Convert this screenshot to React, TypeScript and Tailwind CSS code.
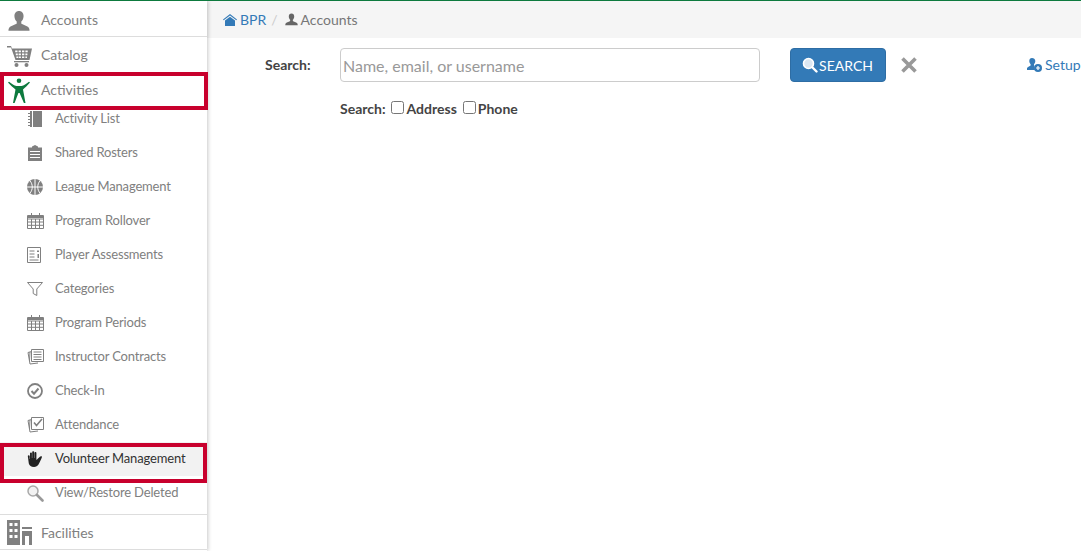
import React from 'react';

const IconUser = ({ className = '' }: { className?: string }) => (
  <svg viewBox="0 0 24 24" className={className} fill="currentColor">
    <path d="M12 1c-3.200 0-5 2.400-5 5.600 0 2.400 1 4.700 2.500 6v2.200c-1.200 1.200-6.200 2.400-8 4.200-.7.800-1 2.300-1 3.500h23c0-1.200-.3-2.700-1-3.500-1.800-1.800-6.800-3-8-4.200v-2.200c1.500-1.300 2.500-3.600 2.500-6C17 3.400 15.200 1 12 1z" />
  </svg>
);

const IconCart = () => (
  <svg viewBox="0 0 25 22" className="w-[25px] h-[22px]" fill="#808080">
    <path d="M0 1h4l1 2.500h20l-2.500 11.500H8.500L4 2.500H0z" />
    <path d="M8.200 5.500h2.300v1.800H8.200zm3.400 0h2.300v1.800h-2.300zm3.400 0h2.300v1.800H15zm3.400 0h2.300v1.800h-2.300zM8.800 8.500h2v1.800h-2zm2.800 0h2.300v1.800h-2.300zm3.400 0h2.300v1.800H15zm3.400 0h2v1.800h-2zM9.400 11.500h1.600v1.600H9.400zm2.200 0h2.300v1.600h-2.300zm3.400 0h2.300v1.600H15zm3.400 0h1.600v1.600h-1.600z" fill="#fff" />
    <rect x="7" y="16" width="15" height="1.300" />
    <circle cx="9.500" cy="20" r="2" />
    <circle cx="19.500" cy="20" r="2" />
  </svg>
);

const IconPerson = () => (
  <svg viewBox="0 0 24 26" className="w-[24px] h-[26px]" fill="#0d7a3e">
    <circle cx="12" cy="2.800" r="2.300" />
    <path d="M1 4.500l1-.8c3 2 5 3.700 7.500 4.300h5c2.500-.6 4.500-2.300 7.500-4.300l1 .8c-2.500 3-5 5.300-7 7l2.500 13.500h-1.600L12.600 15h-1.200L7.600 25H6l2.500-13.500c-2-1.700-5-4-7.500-7z" />
  </svg>
);

const IconNotebook = () => (
  <svg viewBox="0 0 16 16" className="w-4 h-4" fill="#808080">
    <path d="M3 0h12v16H3z" />
    <path d="M1 2h3v1H1zm0 3h3v1H1zm0 3h3v1H1zm0 3h3v1H1zm0 3h3v1H1z" />
    <path d="M5 0h1v16H5z" fill="#fff" />
  </svg>
);

const IconClipboard = () => (
  <svg viewBox="0 0 16 16" className="w-4 h-4" fill="#808080">
    <path d="M1 2.500h4V1.500L8 0l3 1.500v1h4V16H1z" />
    <path d="M3 6h10v1H3zm0 3h10v1H3zm0 3h10v1H3z" fill="#fff" />
  </svg>
);

const IconBall = () => (
  <svg viewBox="0 0 16 16" className="w-4 h-4" fill="none">
    <circle cx="8" cy="8" r="8" fill="#808080" />
    <path d="M8 0v16M0 8h16M3 2c3 3 3 9 0 12M13 2c-3 3-3 9 0 12" stroke="#fff" strokeWidth="1" />
  </svg>
);

const IconCalendar = () => (
  <svg viewBox="0 0 17 16" className="w-[17px] h-4" fill="none" stroke="#808080">
    <path d="M.5 2.500h16v13H.5zM.5 6h16M.5 9h16M.5 12.300h16M4.500 6v9.500M8.500 6v9.500M12.500 6v9.500" />
    <path d="M.5 4h16" strokeWidth="2" />
    <path d="M4.500 0v3M12.500 0v3" />
  </svg>
);

const IconReport = () => (
  <svg viewBox="0 0 14 16" className="w-[14px] h-4" fill="none" stroke="#808080">
    <path d="M.5.500h13v15H.5z" />
    <path d="M2.500 4h5M2.500 7h5M2.500 10h5M2.500 13h9" />
    <path d="M10 3.500h2v1.500h-2zM10.500 7h1.500v4h-1.500z" fill="#808080" stroke="none" />
  </svg>
);

const IconFilter = () => (
  <svg viewBox="0 0 16 14" className="w-4 h-[14px]" fill="none" stroke="#808080">
    <path d="M.5.500h15L9.800 7v6.500l-3.600-2V7z" />
  </svg>
);

const IconPages = ({ check }: { check?: boolean }) => (
  <svg viewBox="0 0 17 16" className="w-[17px] h-4" fill="none" stroke="#808080">
    <path d="M4.500 2.500L1 3.500l2 11.500 8-1" />
    <path d="M3 3L2.500 12" />
    <path d="M4.500.500h12v12h-12z" fill="#fff" />
    {check ? <path d="M7 5.500l2.500 3L15 2" strokeWidth="1.600" /> : <path d="M6.500 3h8M6.500 5.500h8M6.500 8h8M6.500 10.500h8" />}
  </svg>
);

const IconCheck = () => (
  <svg viewBox="0 0 16 16" className="w-4 h-4" fill="none" stroke="#808080" strokeWidth="1.800">
    <circle cx="8" cy="8" r="7" />
    <path d="M4.500 8l2.500 2.700L11.500 5.500" strokeWidth="2" />
  </svg>
);

const IconHand = () => (
  <svg viewBox="0 0 16 16" className="w-4 h-4" fill="#222">
    <path d="M.8 5c0-1 1.700-1 1.900 0v3h.3V2.300c0-1.200 1.900-1.200 1.900 0V7h.3V1.100c0-1.300 2-1.300 2 0V7h.3V2c0-1.200 1.900-1.200 1.900 0v6.800h.4C11.500 7 13 5 14.500 5.200c1 .2.300 1.700-.4 3-1 1.900-1.600 3.800-2.600 5.400C10.500 15.300 9 16 7 16c-3 0-4.500-1.500-5.200-3.500z" />
  </svg>
);

const IconMagnifier = () => (
  <svg viewBox="0 0 17 17" className="w-[17px] h-[17px]" fill="none">
    <circle cx="6" cy="6" r="5" stroke="#a9a9a9" strokeWidth="1.500" fill="#f2f2f2" />
    <path d="M10 10l5.500 5.500" stroke="#999" strokeWidth="2.600" strokeLinecap="round" />
  </svg>
);

const IconBuilding = () => (
  <svg viewBox="0 0 25 25" className="w-[25px] h-[25px]" fill="#808080">
    <path d="M0 0h13v25H0z" />
    <path d="M2.500 3h3v3h-3zm5 0h3v3h-3zm-5 6h3v3h-3zm5 0h3v3h-3zm-5 6h3v3h-3zm5 0h3v3h-3z" fill="#fff" />
    <path d="M15 7h10v2H15zM15 11h10v14h-3v-9h-4v9h-3z" />
  </svg>
);

const IconHome = () => (
  <svg viewBox="0 0 14 12" className="w-[14px] h-3" fill="#337ab7">
    <path d="M7 0L0 5.500l.700.800L7 1.500l6.300 4.800.700-.800z" />
    <path d="M2 6.500L7 2.700l5 3.800V12H2z" />
  </svg>
);

const IconSearch = () => (
  <svg viewBox="0 0 16 16" className="w-4 h-4" fill="none">
    <circle cx="6.500" cy="6.500" r="5" stroke="#fff" strokeWidth="1.600" fill="#dbe7f2" />
    <path d="M10.500 10.500l4 4" stroke="#fff" strokeWidth="2.400" strokeLinecap="round" />
  </svg>
);

const IconSetup = () => (
  <svg viewBox="0 0 15 14" className="w-[15px] h-[14px]">
    <path d="M5 0c-1.700 0-2.700 1.300-2.700 3 0 1.300.5 2.500 1.300 3.200v1.200C3 8 .8 8.800 0 10c-.2.500-.2 1.300-.2 2h8.200C7 9.500 7.500 8 7 7.300V6.200c.8-.7 1.300-1.900 1.300-3.200C8.300 1.300 6.700 0 5 0z" fill="#337ab7" />
    <circle cx="11" cy="10" r="4" fill="#337ab7" />
    <path d="M9 10h4M11 8v4" stroke="#fff" strokeWidth="1.200" />
  </svg>
);

const subItems = [
  { name: 'Activity List', icon: <IconNotebook /> },
  { name: 'Shared Rosters', icon: <IconClipboard /> },
  { name: 'League Management', icon: <IconBall /> },
  { name: 'Program Rollover', icon: <IconCalendar /> },
  { name: 'Player Assessments', icon: <IconReport /> },
  { name: 'Categories', icon: <IconFilter /> },
  { name: 'Program Periods', icon: <IconCalendar /> },
  { name: 'Instructor Contracts', icon: <IconPages /> },
  { name: 'Check-In', icon: <IconCheck /> },
  { name: 'Attendance', icon: <IconPages check /> },
];

const TopItem = ({ name, icon, className = '', textClass = '-mt-[4px]' }: { name: string; icon: React.ReactNode; className?: string; textClass?: string }) => (
  <div className={`shrink-0 flex items-center ${className}`}>
    <div className="w-[41px] shrink-0 flex justify-center pr-[3px]">{icon}</div>
    <span className={`text-[14px] text-[#808080] ${textClass}`}>{name}</span>
  </div>
);

const SubItem = ({ name, icon }: { name: string; icon: React.ReactNode }) => (
  <div className="h-[34px] shrink-0 flex items-center">
    <div className="w-[55px] pl-[27px] shrink-0 flex items-center">{icon}</div>
    <span className="text-[13px] tracking-[-0.17px] text-[#808080]">{name}</span>
  </div>
);

export default function App() {
  return (
    <div className="h-[551px] w-[1081px] overflow-hidden bg-white border-t border-[#0d7a3e] flex font-['Lato','Noto_Sans',sans-serif]">
      {/* Sidebar */}
      <aside className="w-[207px] shrink-0 flex flex-col bg-white shadow-[1px_0_4px_rgba(0,0,0,0.22)] z-10">
        <TopItem name="Accounts" className="h-9 pt-[5px] border-b border-[#dddddd]" icon={<IconUser className="w-[22px] h-[22px] text-[#808080]" />} />
        <TopItem name="Catalog" className="h-9 pt-[2px]" icon={<IconCart />} />
        <div className="relative shrink-0">
          <TopItem name="Activities" className="h-9" icon={<IconPerson />} />
          <div className="absolute left-0 right-[-1px] top-[-1px] h-[38px] border-4 border-[#c8002d] pointer-events-none" />
        </div>
        <div className="-mt-[7px] shrink-0">
          {subItems.map((item) => (
            <SubItem key={item.name} name={item.name} icon={item.icon} />
          ))}
          <div className="relative h-[34px] flex items-center bg-[#f2f2f2]">
            <div className="w-[55px] pl-[27px] shrink-0 flex items-center"><IconHand /></div>
            <span className="text-[13px] tracking-[-0.17px] text-[#333]">Volunteer Management</span>
            <div className="absolute left-0 right-0 top-[1px] h-[40px] border-4 border-[#c8002d] pointer-events-none" />
          </div>
          <SubItem name="View/Restore Deleted" icon={<IconMagnifier />} />
        </div>
        <div className="mt-[4px] shrink-0 border-t border-[#dddddd]">
          <TopItem name="Facilities" textClass="" className="h-[35px] border-b border-[#dddddd]" icon={<IconBuilding />} />
        </div>
      </aside>

      {/* Main */}
      <main className="flex-1 min-w-0 flex flex-col">
        <div className="h-[37px] shrink-0 bg-[#f5f5f5] flex items-center pl-[16px] text-[14px]">
          <IconHome />
          <span className="ml-[3px] text-[#337ab7]">BPR</span>
          <span className="ml-[5px] text-[#cccccc]">/</span>
          <IconUser className="ml-[7px] w-[13px] h-[13px] text-[#666]" />
          <span className="ml-[3px] text-[#777]">Accounts</span>
        </div>

        <div className="flex items-start pt-[10px] pl-[58px] whitespace-nowrap">
          <label className="w-[75px] shrink-0 pt-[6px] text-[14px] font-bold text-[#444]">Search:</label>
          <div className="flex flex-col">
            <input
              readOnly
              placeholder="Name, email, or username"
              className="w-[420px] h-[34px] px-[2px] pt-[1px] border border-[#cccccc] rounded-[4px] text-[16px] bg-white outline-none placeholder:text-[#999]"
            />
            <div className="mt-[18px] flex items-center text-[14px] font-bold text-[#444] leading-[18px]">
              <span>Search:</span>
              <input type="checkbox" readOnly className="ml-[5px] w-[13px] h-[13px] mb-[3px]" />
              <span className="ml-[3px]">Address</span>
              <input type="checkbox" readOnly className="ml-[6px] w-[13px] h-[13px] mb-[3px]" />
              <span className="ml-[2px]">Phone</span>
            </div>
          </div>
          <button className="ml-[30px] w-[96px] h-[34px] shrink-0 flex items-center justify-center gap-[1px] pr-[1px] rounded-[4px] bg-[#337ab7] border border-[#2e6da4] text-white text-[14px]">
            <IconSearch />
            SEARCH
          </button>
          <svg viewBox="0 0 16 16" className="ml-[15px] mt-[9px] w-4 h-4 shrink-0" stroke="#999" strokeWidth="3.600">
            <path d="M1.500 1.500l13 13M14.500 1.500l-13 13" />
          </svg>
          <div className="ml-[110px] mt-[6px] flex items-center gap-[3px] text-[14px] text-[#337ab7]">
            <IconSetup />
            <span>Setup</span>
          </div>
        </div>
      </main>
    </div>
  );
}
